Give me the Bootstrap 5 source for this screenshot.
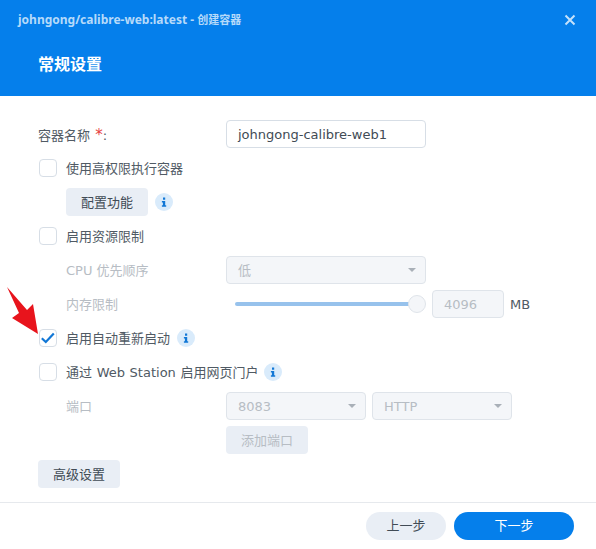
<!DOCTYPE html>
<html lang="zh">
<head>
<meta charset="utf-8">
<link href="https://cdn.jsdelivr.net/npm/bootstrap@5.3.0/dist/css/bootstrap.min.css" rel="stylesheet">
<style>
html,body{height:549px;overflow:hidden;background:#fff}
body{font-family:"DejaVu Sans","Noto Sans CJK SC",sans-serif;font-size:13px;color:#505a64;position:relative}
.dlg-head{height:96px;background:#057feb;color:#fff}
.dlg-top{height:40px;padding:0 18px;color:#b5dafa;font-weight:700;font-size:12px;font-family:"Noto Sans","Noto Sans CJK SC",sans-serif}
.cjk-sm{font-size:11px}
.dlg-x{width:12px;height:12px;margin-right:2px}
.dlg-title{padding:14px 0 0 38px;font-size:16px;font-weight:700;line-height:22px}
.dlg-body{padding:24px 0 0 38px;gap:6px;height:406px}
.frow{height:28px;line-height:28px}
.frow>span:not(.cbx):not(.slider){padding-top:2px}
.frow>span.flabel-top{padding-top:0}
.flabel{width:188px;flex:none}
.star{color:#e64040;font-size:15px;margin-left:1px}
.ind{padding-left:28px}
.muted{color:#b7bdc4}
.syn-input{width:200px;height:28px;border:1px solid #d7dee6;border-radius:4px;padding:0 11px;background:#fff;line-height:28px;color:#414b55}
.syn-sel{height:28px;border:1px solid #dfe4ea;border-radius:4px;background:#f4f6f9;padding:0 9px 0 11px;color:#b7bdc4;line-height:28px}
.syn-sel>span:first-child{padding-top:2px}
.s200{width:200px}.s140{width:140px}
.caret{width:0;height:0;border-left:4px solid transparent;border-right:4px solid transparent;border-top:4px solid #a9b0b8}
.cbx{width:18px;height:18px;border:1px solid #d7dee6;border-radius:4px;background:#fff;margin-left:1px;margin-right:9px;flex:none}
.cbx svg{display:block}
.btn-syn{height:28px;border:0;border-radius:4px;background:#e9eef5;color:#414b55;font-size:13px;padding:2px 0 0;line-height:24px;width:82px}
.btn-syn.is-off{color:#b7bdc4}
.inf{width:18px;height:18px;flex:none;display:block}
.ml7{margin-left:7px}
.ml6{margin-left:6px}
.wsp{word-spacing:.5px}
.slider{width:191px;height:18px;margin-left:9px;margin-right:6px;position:relative;flex:none}
.slider-track{position:absolute;left:0;right:6px;top:7px;height:4px;background:#97c2ec;border-radius:2px}
.slider-thumb{position:absolute;right:0;top:0;width:18px;height:18px;border-radius:50%;background:#f4f6f9;border:1px solid #dfe4ea}
.num{width:72px;height:28px;border:1px solid #dfe4ea;border-radius:4px;background:#f4f6f9;color:#b7bdc4;padding:0 11px;line-height:28px}
.unit{margin-left:6px}
.gap6{gap:6px}
.dlg-foot{border-top:1px solid #e6e9ed;height:47px;padding:9px 22px 0 0;gap:8px}
.pill{height:28px;border:0;border-radius:14px;font-size:13px;line-height:28px;padding:0}
.pill-a{width:80px;background:#e9eef5;color:#414b55}
.pill-b{width:120px;background:#057feb;color:#fff}
.red-arrow{position:absolute;left:0;top:280px;width:50px;height:70px}
</style>
</head>
<body>
<div class="dlg-head">
  <div class="dlg-top d-flex align-items-center justify-content-between">
    <span>johngong/calibre-web:latest - <span class="cjk-sm">创建容器</span></span>
    <svg class="dlg-x" viewBox="0 0 12 12"><path d="M1.5 1.5l9 9M10.5 1.5l-9 9" stroke="#c4e1fb" stroke-width="2" fill="none"/></svg>
  </div>
  <div class="dlg-title">常规设置</div>
</div>
<div class="dlg-body d-flex flex-column">
  <div class="frow d-flex align-items-center"><span class="flabel flabel-top">容器名称 <span class="star">*</span>:</span><div class="syn-input">johngong-calibre-web1</div></div>
  <div class="frow d-flex align-items-center"><span class="cbx"></span><span>使用高权限执行容器</span></div>
  <div class="frow d-flex align-items-center ind"><button class="btn-syn" type="button">配置功能</button><svg class="inf ml7" viewBox="0 0 18 18"><circle cx="9" cy="9" r="9" fill="#d9ebfb"/><path d="M8 4.5h2.2v2.2H8zM6.9 8h3.3v4.2h1V13.7H6.9v-1.5h1V9.5h-1z" fill="#1177d6"/></svg></div>
  <div class="frow d-flex align-items-center"><span class="cbx"></span><span>启用资源限制</span></div>
  <div class="frow d-flex align-items-center"><span class="flabel ind muted">CPU 优先顺序</span><div class="syn-sel s200 d-flex align-items-center justify-content-between"><span>低</span><span class="caret"></span></div></div>
  <div class="frow d-flex align-items-center"><span class="flabel ind muted">内存限制</span><div class="slider"><div class="slider-track"></div><div class="slider-thumb"></div></div><div class="num">4096</div><span class="unit">MB</span></div>
  <div class="frow d-flex align-items-center"><span class="cbx"><svg width="16" height="16" viewBox="0 0 16 16"><path d="M1.8 8.2l4 3.8 8-8.6" stroke="#1177d6" stroke-width="2.2" fill="none"/></svg></span><span>启用自动重新启动</span><svg class="inf ml7" viewBox="0 0 18 18"><circle cx="9" cy="9" r="9" fill="#d9ebfb"/><path d="M8 4.5h2.2v2.2H8zM6.9 8h3.3v4.2h1V13.7H6.9v-1.5h1V9.5h-1z" fill="#1177d6"/></svg></div>
  <div class="frow d-flex align-items-center"><span class="cbx"></span><span class="wsp">通过 Web Station 启用网页门户</span><svg class="inf ml6" viewBox="0 0 18 18"><circle cx="9" cy="9" r="9" fill="#d9ebfb"/><path d="M8 4.5h2.2v2.2H8zM6.9 8h3.3v4.2h1V13.7H6.9v-1.5h1V9.5h-1z" fill="#1177d6"/></svg></div>
  <div class="frow d-flex align-items-center"><span class="flabel ind muted">端口</span><div class="d-flex gap6"><div class="syn-sel s140 d-flex align-items-center justify-content-between"><span>8083</span><span class="caret"></span></div><div class="syn-sel s140 d-flex align-items-center justify-content-between"><span>HTTP</span><span class="caret"></span></div></div></div>
  <div class="frow d-flex align-items-center"><span class="flabel"></span><button class="btn-syn is-off" type="button">添加端口</button></div>
  <div class="frow d-flex align-items-center"><button class="btn-syn" type="button">高级设置</button></div>
</div>
<div class="dlg-foot d-flex justify-content-end">
  <button class="pill pill-a" type="button">上一步</button>
  <button class="pill pill-b" type="button">下一步</button>
</div>
<svg class="red-arrow" viewBox="0 0 50 70"><polygon points="7,7 27,30 33,24 38,54 12,38 19,33" fill="#e8141c"/></svg>
</body>
</html>
